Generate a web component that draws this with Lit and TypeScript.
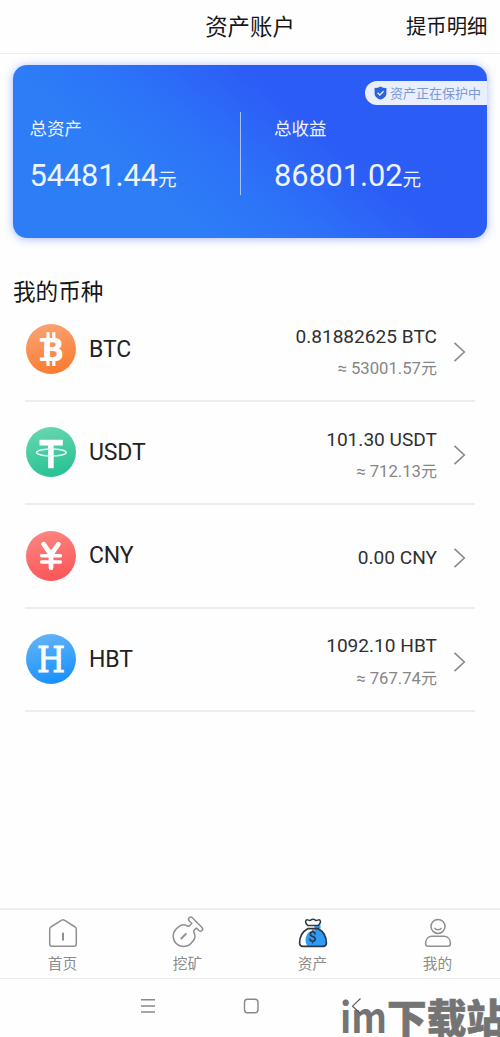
import { LitElement, html, svg, css } from "lit";
import { customElement, property, state } from "lit/decorators.js";

interface Coin {
  code: string;
  amount: string;
  approx?: string;
}

const coins: Coin[] = [
  { code: "BTC", amount: "0.81882625", approx: "53001.57" },
  { code: "USDT", amount: "101.30", approx: "712.13" },
  { code: "CNY", amount: "0.00" },
  { code: "HBT", amount: "1092.10", approx: "767.74" },
];

const gradients: Record<string, [string, string]> = {
  BTC: ["#faa273", "#fb7a2e"],
  USDT: ["#66d6b0", "#27c193"],
  CNY: ["#fb8580", "#fb5558"],
  HBT: ["#62b3f8", "#1890fc"],
};

const marks: Record<string, unknown> = {
  BTC: svg`
    <text x="15.5" y="37" font-family="DejaVu Sans" font-weight="700" font-size="31.5" textLength="23" lengthAdjust="spacingAndGlyphs" fill="#fff">B</text>
    <path d="M22 8.3v7M27.8 8.3v7M22 35v7M27.8 35v7" stroke="#fff" stroke-width="3.2"/>
    <path d="M13.8 15.9h7M13.8 35.3h7" stroke="#fff" stroke-width="3.6"/>`,
  USDT: svg`
    <path d="M13.5 12.8h23.3v5.6h-9.1v22.9h-5.6v-22.9h-8.6z" fill="#fff"/>
    <ellipse cx="25.4" cy="25.5" rx="14.8" ry="3.5" fill="none" stroke="#e4faf2" stroke-width="1.5"/>`,
  CNY: svg`
    <path d="M17.6 13.2 25 23.5 32.4 13.2M25 23v13.8" fill="none" stroke="#fff" stroke-width="4.8" stroke-linecap="round" stroke-linejoin="round"/>
    <path d="M15.6 24.8h18.8M15.6 31h18.8" stroke="#fff" stroke-width="3.6" stroke-linecap="round"/>`,
  HBT: svg`
    <text x="11" y="38" font-family="DejaVu Serif" font-size="34.5" textLength="28" lengthAdjust="spacingAndGlyphs" fill="#fff" stroke="#fff" stroke-width="1">H</text>`,
};

@customElement("coin-icon")
class CoinIcon extends LitElement {
  @property() code = "BTC";

  static styles = css`
    :host { display: block; width: 50px; height: 50px; }
    svg { display: block; }
  `;

  render() {
    const [top, bottom] = gradients[this.code];
    return html`<svg width="50" height="50" viewBox="0 0 50 50">
      <defs><linearGradient id="g" x1="0.35" y1="0" x2="0.6" y2="1">
        <stop offset="0" stop-color=${top}></stop><stop offset="1" stop-color=${bottom}></stop>
      </linearGradient></defs>
      <circle cx="25" cy="25" r="25" fill="url(#g)"></circle>
      ${marks[this.code]}
    </svg>`;
  }
}

@customElement("coin-row")
class CoinRow extends LitElement {
  @property({ attribute: false }) coin!: Coin;

  static styles = css`
    :host { display: block; }
    .row {
      box-sizing: border-box;
      display: flex;
      align-items: flex-start;
      height: 103.2px;
      border-bottom: 2px solid #ededed;
    }
    .icon { margin: 25.3px 13px 0 1px; }
    .name { flex: 1; margin-top: 36px; font-size: 23px; line-height: 30px; letter-spacing: -0.1px; color: #222; }
    .values { margin: 25.5px 16px 0 0; text-align: right; }
    .solo { margin-top: 40.5px; }
    .amount { font-size: 19.1px; line-height: 24px; color: #303030; }
    .approx { margin-top: 9.5px; font-size: 16.7px; line-height: 22px; color: #868686; }
    .yuan { font-size: 16px; }
    .chevron { display: block; margin: 42px 9px 0 0; }
  `;

  render() {
    const c = this.coin;
    return html`<div class="row">
      <coin-icon class="icon" code=${c.code}></coin-icon>
      <div class="name">${c.code}</div>
      <div class="values ${c.approx ? "" : "solo"}">
        <div class="amount">${c.amount} ${c.code}</div>
        ${c.approx ? html`<div class="approx">≈ ${c.approx}<span class="yuan">元</span></div>` : null}
      </div>
      <svg class="chevron" width="13" height="22" viewBox="0 0 13 22">
        <path d="M1.5 1.8 11.3 11 1.5 20.2" fill="none" stroke="#8a8a8a" stroke-width="1.6"></path>
      </svg>
    </div>`;
  }
}

const tabs = [
  {
    label: "首页",
    icon: svg`<path d="M13.7 2.1Q15 1.2 16.3 2.1L27.2 9Q28.3 9.8 28.3 11.2V26Q28.3 28.3 26 28.3H4Q1.7 28.3 1.7 26V11.2Q1.7 9.8 2.8 9Z"/><path d="M15 14.8v7.8" stroke-width="2"/>`,
  },
  {
    label: "挖矿",
    icon: svg`<g transform="translate(10.6 18.2) rotate(45)">
      <path d="M-3.2-14.8V-12Q-3.2-10-6-9.4C-9.2-8.2-10.4-4-10.4 0A10.4 10.4 0 0 0 10.4 0C10.4-4 9.2-8.2 6-9.4Q3.2-10 3.2-12V-14.8H6.8A2.2 2.2 0 0 0 6.8-19.2H-6.8A2.2 2.2 0 0 0-6.8-14.8Z"/>
      <path d="M0-4V4" stroke-width="2"/></g>`,
  },
  {
    label: "资产",
    icon: svg`<path d="M16.5 6.5H22.5V10.6H20.5C26 14 28.4 19 28.2 28H9.5C7 25 7 20 9 16.5C10.5 14 13 12.5 16.5 12.5Z" fill="#2f9bf5" stroke="none"/>
      <path d="M9.7 7.4C7.6 5.6 7 3.4 8.2 2.1C9.6 1 10.8 3 12.4 2.3C14 1.1 16 1.1 17.6 2.3C19.2 3 20.6 1 21.8 2.1C23 3.4 22.2 5.6 20.3 7.4Z" fill="#fefefe" stroke="#303943" stroke-width="1.5"/>
      <path d="M10 10.6H20C26 14 28.4 19 28.4 25C28.4 27.4 27.4 28.3 25 28.3H5C2.6 28.3 1.6 27.4 1.6 25C1.6 19 4 14 10 10.6Z" stroke="#303943" stroke-width="1.7"/>
      <text x="10.6" y="23.6" font-family="Roboto" font-weight="500" font-size="14.5" fill="#26394c" stroke="none">$</text>`,
  },
  {
    label: "我的",
    icon: svg`<circle cx="15" cy="8.4" r="7"/><path d="M11.4 9.8C13 12.3 17 12.3 18.6 9.8M8.6 18.2H21.4C25.4 18.2 27.4 22 27.4 26Q27.4 28.3 25 28.3H5Q2.6 28.3 2.6 26C2.6 22 4.6 18.2 8.6 18.2Z"/>`,
  },
];

@customElement("app-root")
class AppRoot extends LitElement {
  @state() private list = coins;

  static styles = css`
    :host {
      display: block;
      font-family: Roboto, "Noto Sans CJK SC", sans-serif;
      color: #161616;
    }
    .screen {
      box-sizing: border-box;
      position: relative;
      display: flex;
      flex-direction: column;
      width: 500px;
      height: 1037px;
      overflow: hidden;
      background: #fefefe;
    }
    .header {
      box-sizing: border-box;
      display: grid;
      grid-template-columns: 1fr auto 1fr;
      align-items: center;
      height: 54px;
      padding: 0 12.5px 4px;
      border-bottom: 1px solid #ededf0;
    }
    .title { grid-column: 2; font-size: 22.4px; }
    .action { justify-self: end; font-size: 20.4px; }
    .card {
      box-sizing: border-box;
      flex: none;
      display: grid;
      grid-template-columns: 227px 1px 1fr;
      height: 173px;
      margin: 11px 13px 0;
      border-radius: 14px;
      position: relative;
      color: #eef4ff;
      background: linear-gradient(40deg, #2d7ef6 28%, #2c72f8 45%, #2c5cf6 64%);
      box-shadow: 0 1px 10px rgba(70, 100, 255, 0.45);
    }
    .cell { padding: 51px 0 0 16.5px; }
    .cell-right { padding-left: 33px; }
    .rule { height: 83px; margin-top: 47px; background: #a9c2fb; }
    .label { font-size: 17.5px; line-height: 26px; }
    .sum { margin-top: 13.5px; font-size: 30.8px; line-height: 40px; white-space: nowrap; letter-spacing: -0.1px; }
    .unit { font-size: 18.6px; }
    .badge {
      box-sizing: border-box;
      position: absolute;
      top: 16px;
      right: 0;
      display: flex;
      align-items: center;
      gap: 3px;
      width: 122px;
      height: 24px;
      padding: 0 0 2px 9px;
      border-radius: 12px 0 0 12px;
      background: #e9effd;
      color: #7d98d8;
      font-size: 13px;
      white-space: nowrap;
    }
    .badge svg { margin-top: 2px; }
    .section { margin: 38.5px 13px 0; font-size: 22.6px; line-height: 32px; }
    .list { flex: 1; margin: -9.5px 25px 0; }
    .tabs {
      box-sizing: border-box;
      display: grid;
      grid-template-columns: repeat(4, 1fr);
      height: 71px;
      border-top: 2px solid #ededed;
      border-bottom: 1px solid #ececec;
    }
    .tab {
      display: flex;
      flex-direction: column;
      align-items: center;
      padding-top: 8px;
      color: #8c8c8c;
      font-size: 14.7px;
      line-height: 20px;
    }
    .tab svg { margin-bottom: 5.5px; overflow: visible; }
    .system { display: flex; align-items: flex-start; height: 58px; }
    .system svg { display: block; }
    .mark { position: absolute; right: 0; bottom: 0; display: block; }
  `;

  render() {
    return html`<div class="screen">
      <div class="header">
        <div class="title">资产账户</div>
        <div class="action">提币明细</div>
      </div>
      <div class="card">
        <div class="cell">
          <div class="label">总资产</div>
          <div class="sum">54481.44<span class="unit">元</span></div>
        </div>
        <div class="rule"></div>
        <div class="cell cell-right">
          <div class="label">总收益</div>
          <div class="sum">86801.02<span class="unit">元</span></div>
        </div>
        <div class="badge">
          <svg width="13" height="14" viewBox="0 0 13 14">
            <path d="M6.5.4Q9 2 12.4 2V7.4C12.4 10.3 9.8 12.4 6.5 13.6C3.2 12.4.6 10.3.6 7.4V2Q4 2 6.5.4Z" fill="#2e61dc"></path>
            <path d="M3.6 6.8 5.8 9 9.6 5.3" fill="none" stroke="#e9effd" stroke-width="1.3"></path>
          </svg>
          <span>资产正在保护中</span>
        </div>
      </div>
      <div class="section">我的币种</div>
      <div class="list">
        ${this.list.map((c) => html`<coin-row .coin=${c}></coin-row>`)}
      </div>
      <div class="tabs">
        ${tabs.map((t) => html`<div class="tab">
          <svg width="30" height="30" viewBox="0 0 30 30" fill="none" stroke="#909090" stroke-width="1.5" stroke-linejoin="round">${t.icon}</svg>
          <span>${t.label}</span>
        </div>`)}
      </div>
      <div class="system">
        <svg width="500" height="58" viewBox="0 0 500 58" fill="none" stroke="#888" stroke-width="1.4">
          <path d="M141 20.8h14M141 27h14M141 33h14"></path>
          <rect x="244.5" y="20.3" width="13.5" height="13.5" rx="3"></rect>
        </svg>
      </div>
      <svg class="mark" width="170" height="57" viewBox="330 980 170 57" font-family="Noto Sans CJK SC" font-weight="900" fill="#747474">
        <text x="340" y="1033" font-size="41" font-weight="700" textLength="47" lengthAdjust="spacingAndGlyphs">im</text>
        <text x="387" y="1032.5" font-size="39.5" textLength="119" lengthAdjust="spacingAndGlyphs" stroke="#747474" stroke-width="0.6">下载站</text>
        <path d="M360.5 998.5 352.5 1006.2 360.5 1013.5" fill="none" stroke="#555" stroke-width="1.1"></path>
      </svg>
    </div>`;
  }
}
